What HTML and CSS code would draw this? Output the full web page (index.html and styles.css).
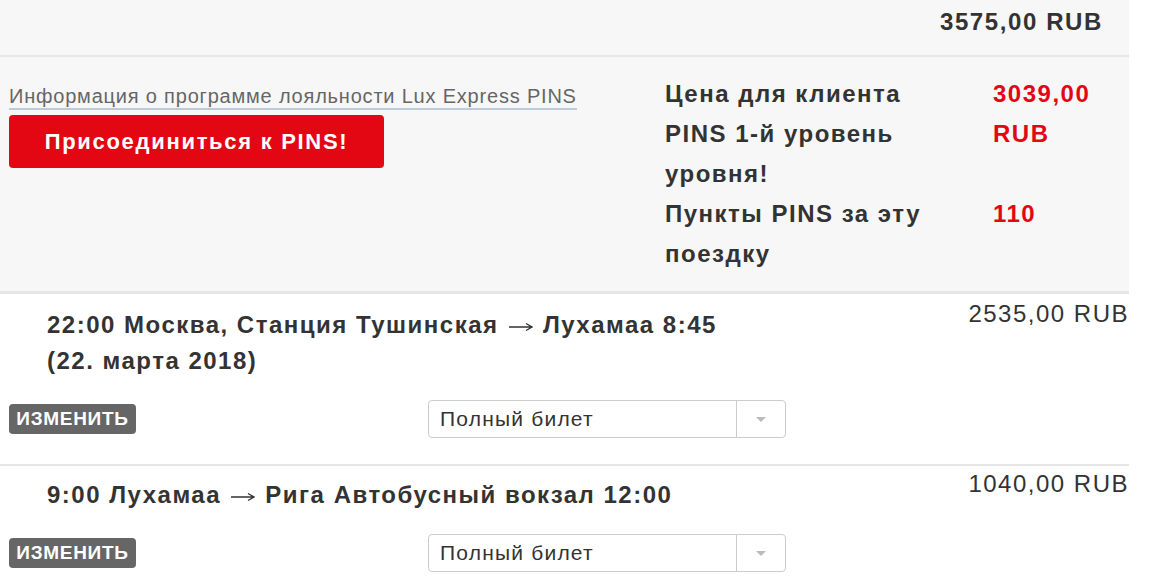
FILE: index.html
```html
<!DOCTYPE html>
<html lang="ru">
<head>
<meta charset="utf-8">
<link rel="stylesheet" href="styles.css">
</head>
<body>
<div class="cart">
  <div class="total">3575,00 RUB</div>
  <div class="loyalty">
    <div class="loyalty-left">
      <a class="info-link" href="#">Информация о программе лояльности Lux Express PINS</a>
      <button class="join-btn">Присоединиться к PINS!</button>
    </div>
    <div class="loyalty-right">
      <div class="l-label">Цена для клиента PINS 1-й уровень уровня!</div>
      <div class="l-value">3039,00 RUB</div>
      <div class="l-label">Пункты PINS за эту поездку</div>
      <div class="l-value">110</div>
    </div>
  </div>
  <div class="segment">
    <div class="seg-head">
      <div class="seg-title"><span>22:00 Москва, Станция Тушинская</span> <svg class="arrow" viewBox="0 0 24 10" width="24" height="10"><path d="M0 5H23M17 1.5L23 5L17 8.5" fill="none" stroke="#333" stroke-width="1.3"/></svg> <span>Лухамаа 8:45</span><span class="seg-date">(22. марта 2018)</span></div>
      <div class="seg-price">2535,00 RUB</div>
    </div>
    <div class="seg-controls">
      <span class="change-btn">ИЗМЕНИТЬ</span>
      <div class="ticket-select">
        <span class="ticket-value">Полный билет</span>
        <span class="ticket-arrow"><span class="tri"></span></span>
      </div>
    </div>
  </div>
  <div class="segment">
    <div class="seg-head">
      <div class="seg-title"><span>9:00 Лухамаа</span> <svg class="arrow" viewBox="0 0 24 10" width="24" height="10"><path d="M0 5H23M17 1.5L23 5L17 8.5" fill="none" stroke="#333" stroke-width="1.3"/></svg> <span>Рига Автобусный вокзал 12:00</span></div>
      <div class="seg-price">1040,00 RUB</div>
    </div>
    <div class="seg-controls">
      <span class="change-btn">ИЗМЕНИТЬ</span>
      <div class="ticket-select">
        <span class="ticket-value">Полный билет</span>
        <span class="ticket-arrow"><span class="tri"></span></span>
      </div>
    </div>
  </div>
</div>
</body>
</html>
```
FILE: styles.css
```css
* { box-sizing: border-box; }
html, body { margin: 0; padding: 0; background: #fff; }
body { font-family: "Liberation Sans", Arial, sans-serif; color: #333; }

.cart { width: 1129px; }

.total {
  background: #f7f7f7;
  height: 57px;
  padding: 6px 26px 0 0;
  text-align: right;
  font-size: 24px;
  font-weight: bold;
  letter-spacing: 1.6px;
  line-height: 32px;
  color: #333;
  border-bottom: 2px solid #e6e6e6;
}

.loyalty {
  background: #f7f7f7;
  display: flex;
  padding: 17px 0 17px 9px;
  border-bottom: 3px solid #e6e6e6;
}
.loyalty-left {
  width: 656px;
  display: flex;
  flex-direction: column;
  align-items: flex-start;
  padding-top: 10px;
}
.info-link {
  font-size: 20px;
  letter-spacing: 0.8px;
  line-height: 24px;
  color: #666;
  text-decoration: none;
  border-bottom: 2px solid #bccbdb;
}
.join-btn {
  margin-top: 5px;
  width: 375px;
  height: 53px;
  background: #e30613;
  border: none;
  border-radius: 4px;
  color: #fff;
  font-family: "Liberation Sans", Arial, sans-serif;
  font-size: 22px;
  font-weight: bold;
  letter-spacing: 1.7px;
  padding: 0;
}
.loyalty-right {
  display: grid;
  grid-template-columns: 290px 120px;
  column-gap: 38px;
  font-size: 24px;
  font-weight: bold;
  letter-spacing: 1.5px;
  line-height: 40px;
}
.l-label { color: #333; }
.l-value { color: #e30613; }

.segment {
  background: #fff;
  padding: 6px 0 26px 9px;
  border-bottom: 2px solid #e6e6e6;
}
.segment + .segment { padding-top: 4px; }
.seg-head {
  display: flex;
  justify-content: space-between;
  align-items: flex-start;
}
.seg-title {
  margin-top: 7px;
  padding-left: 38px;
  max-width: 745px;
  font-size: 24px;
  font-weight: bold;
  letter-spacing: 1.5px;
  line-height: 36px;
  color: #333;
}
.seg-date { display: block; }
.arrow {
  display: inline-block;
  vertical-align: middle;
  margin: 0 2px;
}
.seg-price {
  font-size: 24px;
  letter-spacing: 1.5px;
  line-height: 28px;
  color: #333;
}
.seg-controls {
  display: grid;
  grid-template-columns: 419px 358px;
  align-items: center;
  margin-top: 21px;
}
.change-btn {
  width: 127px;
  height: 30px;
  background: #666;
  color: #fff;
  border-radius: 4px;
  font-size: 19px;
  font-weight: bold;
  letter-spacing: 0.7px;
  line-height: 30px;
  text-align: center;
}
.ticket-select {
  height: 38px;
  border: 1px solid #ccc;
  border-radius: 4px;
  background: #fff;
  display: flex;
  align-items: center;
}
.ticket-value {
  flex: 1;
  padding-left: 11px;
  font-size: 21px;
  letter-spacing: 1.2px;
  color: #333;
}
.ticket-arrow {
  width: 49px;
  height: 36px;
  border-left: 1px solid #ccc;
  display: flex;
  align-items: center;
  justify-content: center;
}
.tri {
  width: 0;
  height: 0;
  border-left: 5px solid transparent;
  border-right: 5px solid transparent;
  border-top: 5px solid #bbb;
}
```
